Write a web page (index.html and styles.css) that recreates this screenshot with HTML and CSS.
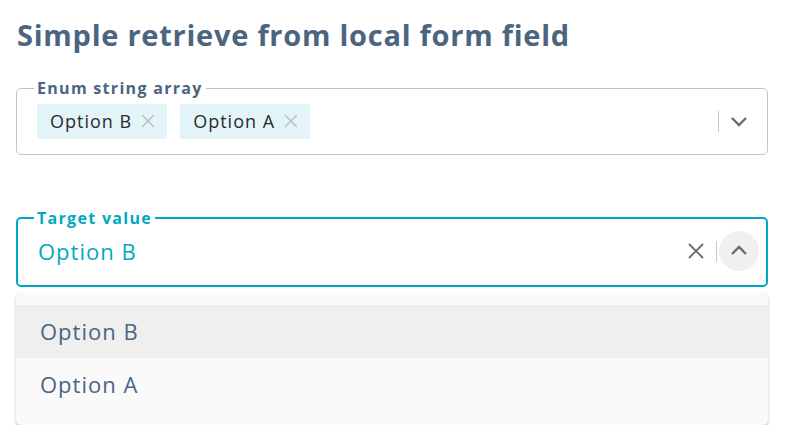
FILE: index.html
```html
<!DOCTYPE html>
<html lang="en">
<head>
    <meta charset="UTF-8">
    <meta name="viewport" content="width=device-width, initial-scale=1.0">
    <title>Simple retrieve from local form field</title>
    <link rel="stylesheet" href="styles.css">
</head>
<body>
    <h1 class="title">Simple retrieve from local form field</h1>

    <fieldset class="field">
        <legend class="field-label">Enum string array</legend>
        <div class="field-row">
            <div class="chips">
                <span class="chip">Option B
                    <svg class="chip-x" viewBox="0 0 14 14" width="14" height="14"><path d="M1 1 L13 13 M13 1 L1 13"/></svg>
                </span>
                <span class="chip">Option A
                    <svg class="chip-x" viewBox="0 0 14 14" width="14" height="14"><path d="M1 1 L13 13 M13 1 L1 13"/></svg>
                </span>
            </div>
            <div class="indicators">
                <span class="sep"></span>
                <span class="arrow">
                    <svg viewBox="0 0 20 20" width="20" height="20"><path d="M3 7 L10 14 L17 7"/></svg>
                </span>
            </div>
        </div>
    </fieldset>

    <fieldset class="field field-active">
        <legend class="field-label">Target value</legend>
        <div class="field-row">
            <span class="value">Option B</span>
            <div class="indicators">
                <span class="clear">
                    <svg viewBox="0 0 20 20" width="20" height="20"><path d="M3 3 L17 17 M17 3 L3 17"/></svg>
                </span>
                <span class="sep"></span>
                <span class="arrow arrow-open">
                    <svg viewBox="0 0 20 20" width="20" height="20"><path d="M3 13 L10 6 L17 13"/></svg>
                </span>
            </div>
        </div>
    </fieldset>

    <ul class="menu">
        <li class="menu-item focused">Option B</li>
        <li class="menu-item">Option A</li>
    </ul>
</body>
</html>
```

FILE: styles.css
```css
* {
    margin: 0;
    padding: 0;
    box-sizing: border-box;
}

body {
    font-family: 'Open Sans', 'Liberation Sans', sans-serif;
    background: #fff;
    color: #333;
    padding: 15px 23px 0 16px;
}

.title {
    font-size: 29px;
    font-weight: 700;
    letter-spacing: 0.75px;
    line-height: 40px;
    color: #4b6580;
    padding-left: 1px;
    margin-bottom: 23px;
}

/* fieldset with notched label */
.field {
    border: 1px solid #c4c4c4;
    border-radius: 5px;
    padding: 0 8px 13px 17px;
    margin-bottom: 53px;
}

.field-label {
    padding: 0 3px;
    font-size: 16px;
    font-weight: 700;
    letter-spacing: 1.3px;
    line-height: 20px;
    color: #4b6580;
}

.field-row {
    display: flex;
    align-items: center;
    justify-content: space-between;
    margin-top: 3px;
}

.chips {
    display: flex;
    gap: 13px;
    padding-left: 3px;
}

.chip {
    display: flex;
    align-items: center;
    gap: 9px;
    height: 35px;
    padding: 0 12px 0 13px;
    background: #e3f5f8;
    font-size: 18px;
    letter-spacing: 1px;
    color: #2b2b2b;
}

.chip-x path {
    stroke: #b9c4c7;
    stroke-width: 1.6;
    fill: none;
}

.indicators {
    display: flex;
    align-items: center;
}

.sep {
    width: 1px;
    height: 21px;
    background: #c8c8c8;
}

.arrow,
.clear {
    display: flex;
    align-items: center;
    justify-content: center;
    width: 40px;
    height: 40px;
}

.arrow path,
.clear path {
    stroke: #6b6b6b;
    stroke-width: 2.4;
    fill: none;
}

.clear path {
    stroke-width: 1.8;
}

.field-active {
    border: 2px solid #00a9c1;
    padding: 0 7px 14px 16px;
    margin-bottom: 6px;
}

.field-active .field-label {
    color: #00a9c1;
}

.field-active .value {
    font-size: 22px;
    letter-spacing: 1px;
    color: #00a9c1;
    padding-left: 4px;
}

.sep + .arrow-open {
    margin-left: 2px;
}

.arrow-open {
    border-radius: 50%;
    background: #f0f0f0;
}

.menu {
    list-style: none;
    background: #fafafa;
    border-radius: 5px;
    box-shadow: 0 2px 3px rgba(0,0,0,0.22), 0 0 1px rgba(0,0,0,0.15);
    padding: 12px 0 13px;
}

.menu-item {
    height: 53px;
    line-height: 53px;
    padding-left: 24px;
    font-size: 22px;
    letter-spacing: 1px;
    color: #4b6580;
}

.menu-item + .menu-item {
    height: 54px;
}

.menu-item.focused {
    background: #efefef;
}
```
